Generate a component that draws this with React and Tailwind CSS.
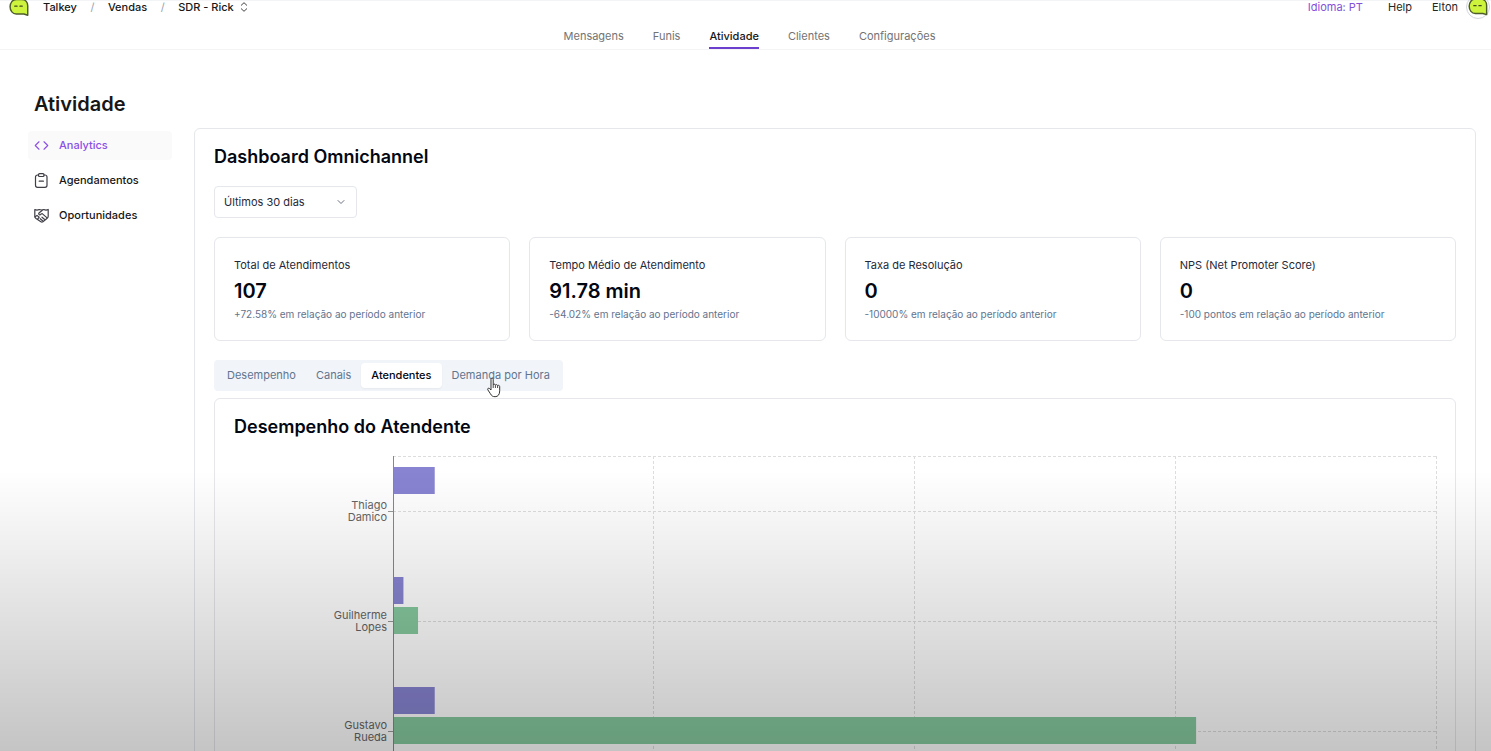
import { useState } from "react";
import { ChevronDown, Code } from "lucide-react";

const navItems = ["Mensagens", "Funis", "Atividade", "Clientes", "Configurações"];

const sideItems = [
  { label: "Analytics", icon: CodeIcon },
  { label: "Agendamentos", icon: ClipboardIcon },
  { label: "Oportunidades", icon: DealIcon },
];

const stats = [
  {
    label: "Total de Atendimentos",
    value: "107",
    note: "+72.58% em relação ao período anterior",
  },
  {
    label: "Tempo Médio de Atendimento",
    value: "91.78 min",
    note: "-64.02% em relação ao período anterior",
  },
  {
    label: "Taxa de Resolução",
    value: "0",
    note: "-10000% em relação ao período anterior",
  },
  {
    label: "NPS (Net Promoter Score)",
    value: "0",
    note: "-100 pontos em relação ao período anterior",
  },
];

const tabs = ["Desempenho", "Canais", "Atendentes", "Demanda por Hora"];

const attendants = [
  { first: "Thiago", last: "Damico", total: 4, time: 0 },
  { first: "Guilherme", last: "Lopes", total: 1, time: 2.4 },
  { first: "Gustavo", last: "Rueda", total: 4, time: 77 },
];

const ROW = 110;

function CodeIcon() {
  return <Code size={15} strokeWidth={1.8} />;
}

function ClipboardIcon() {
  return (
    <svg viewBox="0 0 15 15" className="size-[15px]" fill="none" stroke="#3f3f46" strokeWidth="1.2" strokeLinejoin="round" strokeLinecap="round" aria-hidden="true">
      <path d="M4.500 2H3.500a2 2 0 0 0-2 2v8.300a2 2 0 0 0 2 2h7.500a2 2 0 0 0 2-2V4a2 2 0 0 0-2-2h-1" />
      <rect x="4.500" y="0.700" width="5.500" height="2.800" rx="1" />
      <path d="M5.200 8.200h4.200" />
    </svg>
  );
}

// handshake inside a shield outline
function DealIcon() {
  return (
    <svg viewBox="0 0 15 15" className="size-[15px]" fill="none" stroke="#3f3f46" strokeWidth="1.2" strokeLinejoin="round" strokeLinecap="round" aria-hidden="true">
      <path d="M0.800 1.500c1.600.8 3 .7 4.400 0l2.300.5 2.300-.5c1.400.7 2.800.8 4.400 0v6.700c0 1-.5 1.700-1.300 2.300l-4 3.200c-.7.5-1.300.5-2 0L2 10.400C1.200 9.800.800 9.100.800 8.200z" />
      <path d="M8.300 2.300 5 5c-.8.8.2 2.200 1.400 1.600L8.200 5.600l4.600 4M10.400 11.300 8 9.200M8.600 12.800 6.200 10.700M1 8.800l2-1.400 2.200 1.800-1.500 1.800" />
    </svg>
  );
}

function Mascot({ className }) {
  return (
    <svg viewBox="0 0 22 20" className={className} aria-hidden="true">
      <path
        d="M8 1.2h6c4 0 6.6 3 6.6 7v10.3l-4.2-1.3H8c-4 0-6.8-3.6-6.8-8S4 1.2 8 1.2z"
        fill="#cdf33d"
        stroke="#4d5c2b"
        strokeWidth="1.6"
        strokeLinejoin="round"
      />
      <path
        d="M6.300 8.500h2.600M12 8.500h2.600"
        fill="none"
        stroke="#3f4a22"
        strokeWidth="1.3"
        strokeLinecap="round"
      />
    </svg>
  );
}

function HandPointer() {
  return (
    <svg
      viewBox="0 0 16 22"
      className="pointer-events-none absolute top-[14px] left-[44px] h-[22px] w-4"
      aria-hidden="true"
    >
      <path
        d="M5 2.2c0-1.6 2.2-1.6 2.2 0v5.6c.3-1 2-.9 2.2.3.5-.8 2-.6 2.2.5.6-.6 2.1-.3 2.1 1v4.2c0 3.7-1.7 5.9-4.6 5.9-2.4 0-3.600-.9-4.700-3L1.800 12.800c-.7-1.400.9-2.200 1.900-1.100L5 13z"
        fill="#fff"
        stroke="#333"
        strokeWidth="1"
        strokeLinejoin="round"
      />
      <path
        d="M7.200 7.800v3.200M9.400 8.200v2.800M11.600 8.800v2.200"
        stroke="#333"
        strokeWidth="0.9"
      />
    </svg>
  );
}

function Header() {
  return (
    <header className="border-y border-gray-100 text-[11px]">
      <div className="flex h-3 items-center justify-between pr-px pl-[9px]">
        <div className="flex items-center font-medium text-neutral-900">
          <Mascot className="mr-[14px] h-[19px] w-5" />
          <a href="#talkey">Talkey</a>
          <span className="w-[31px] text-center font-normal text-gray-400">/</span>
          <a href="#vendas">Vendas</a>
          <span className="w-[31px] text-center font-normal text-gray-400">/</span>
          <button type="button" className="flex items-center gap-[6px]">
            SDR - Rick
            <svg viewBox="0 0 8 10" className="h-[10px] w-2" fill="none" stroke="#444" aria-hidden="true">
              <path d="M1 3.500 4 0.700l3 2.800M1 6.500l3 2.800 3-2.800" strokeLinejoin="round" />
            </svg>
          </button>
        </div>
        <div className="flex items-center text-neutral-800">
          <button type="button" className="mr-[25px] text-[#8350d8]">
            Idioma: PT
          </button>
          <a href="#help" className="mr-5">
            Help
          </a>
          <span className="mr-2">Elton</span>
          <div className="flex size-6 items-center justify-center rounded-full border border-gray-300">
            <Mascot className="h-[18px] w-5" />
          </div>
        </div>
      </div>
      <nav className="flex h-9 items-end justify-center gap-[29px] pl-2 text-neutral-500">
        {navItems.map((item) => (
          <a
            key={item}
            href={`#${item.toLowerCase()}`}
            className={
              item === "Atividade"
                ? "border-b-2 border-[#6d3fcf] pb-[3px] font-medium text-neutral-900"
                : "border-b-2 border-transparent pb-[3px]"
            }
          >
            {item}
          </a>
        ))}
      </nav>
    </header>
  );
}

function Sidebar() {
  return (
    <aside className="flex w-36 shrink-0 flex-col gap-[6px] pt-[3px]">
      {sideItems.map(({ label, icon: Icon }, i) => (
        <a
          key={label}
          href={`#${label.toLowerCase()}`}
          className={
            i === 0
              ? "flex h-[29px] items-center gap-[10px] rounded bg-[#fafafa] px-[6px] text-[11px] font-medium text-[#8b50e4]"
              : "flex h-[29px] items-center gap-[10px] rounded px-[6px] text-[11px] font-medium text-neutral-900"
          }
        >
          <Icon />
          {label}
        </a>
      ))}
    </aside>
  );
}

function AttendantChart() {
  const height = attendants.length * ROW;

  return (
    <div className="flex">
      <div className="w-[153px] shrink-0 text-right text-[11px] leading-3 text-[#666]">
        {attendants.map((a) => (
          <div key={a.first} className="flex h-[110px] flex-col justify-center">
            <span>{a.first}</span>
            <span>{a.last}</span>
          </div>
        ))}
      </div>
      <svg className="w-[6px] shrink-0" height={height} aria-hidden="true">
        {attendants.map((a, i) => (
          <path key={a.first} d={`M1 ${i * ROW + 55.5}h5`} stroke="#999" />
        ))}
      </svg>
      <svg className="min-w-0 flex-1 overflow-visible" height={height} role="img" aria-label="Desempenho do Atendente">
        <g stroke="#ddd" strokeDasharray="3 2" shapeRendering="crispEdges">
          <line x1="0" x2="100%" y1="0.5" y2="0.5" />
          {attendants.map((a, i) => (
            <line key={a.first} x1="0" x2="100%" y1={i * ROW + 55} y2={i * ROW + 55} />
          ))}
          {["25%", "50%", "75%", "100%"].map((x) => (
            <line key={x} x1={x} x2={x} y1="0" y2={height} />
          ))}
        </g>
        {attendants.map((a, i) => (
          <g key={a.first}>
            <rect x="0" y={i * ROW + 11} width={`${a.total}%`} height="27" fill="#8884d2" />
            <rect x="0" y={i * ROW + 41} width={`${a.time}%`} height="27" fill="#87ca9f" />
          </g>
        ))}
        <line x1="0.5" x2="0.5" y1="0" y2={height} stroke="#888" />
      </svg>
    </div>
  );
}

function App() {
  const [period, setPeriod] = useState("30");
  const [tab, setTab] = useState("Atendentes");

  return (
    <div className="h-screen overflow-hidden bg-white font-['Inter',sans-serif] text-gray-950">
      <Header />

      <div className="pt-10 pr-[15px] pl-7">
        <h1 className="mb-[10px] pl-[6px] text-xl leading-7 font-semibold text-neutral-900">
          Atividade
        </h1>

        <div className="flex gap-[22px]">
          <Sidebar />

          <main className="min-w-0 flex-1 rounded-md border border-gray-200 p-[19px] pt-4">
            <h2 className="mb-[17px] text-lg leading-6 font-semibold">
              Dashboard Omnichannel
            </h2>

            <div className="relative w-[143px]">
              <select
                aria-label="Período"
                value={period}
                onChange={(e) => setPeriod(e.target.value)}
                className="h-8 w-full appearance-none rounded border border-gray-200 bg-white px-[9px] text-[11px] text-gray-800"
              >
                <option value="7">Últimos 7 dias</option>
                <option value="30">Últimos 30 dias</option>
                <option value="90">Últimos 90 dias</option>
              </select>
              <ChevronDown
                size={12}
                className="pointer-events-none absolute top-[10px] right-[10px] text-gray-500"
              />
            </div>

            <div className="mt-[19px] grid grid-cols-4 gap-[19px]">
              {stats.map((s) => (
                <div key={s.label} className="rounded-md border border-gray-200 p-[19px]">
                  <p className="text-[11px] leading-4 text-gray-800">{s.label}</p>
                  <p className="mt-1 text-xl leading-7 font-semibold">{s.value}</p>
                  <p className="mt-[2px] text-[10px] leading-[14px] text-slate-500">{s.note}</p>
                </div>
              ))}
            </div>

            <div className="mt-[19px] flex w-fit rounded bg-slate-100 p-[3px]">
              {tabs.map((t) => (
                <button
                  key={t}
                  type="button"
                  onClick={() => setTab(t)}
                  className={
                    t === tab
                      ? "relative h-[25px] rounded-sm bg-white px-[10px] text-[11px] font-medium shadow-xs"
                      : "relative h-[25px] rounded-sm px-[10px] text-[11px] text-slate-500"
                  }
                >
                  {t}
                  {t === "Demanda por Hora" && <HandPointer />}
                </button>
              ))}
            </div>

            <section className="mt-[7px] rounded-md border border-gray-200 p-[19px] pt-4">
              <h2 className="mb-[17px] text-lg leading-6 font-semibold">
                Desempenho do Atendente
              </h2>
              <AttendantChart />
            </section>
          </main>
        </div>
      </div>

      <div className="pointer-events-none fixed inset-x-0 bottom-0 h-[280px] bg-linear-to-t from-black/23 to-transparent" />
    </div>
  );
}

export default App;
